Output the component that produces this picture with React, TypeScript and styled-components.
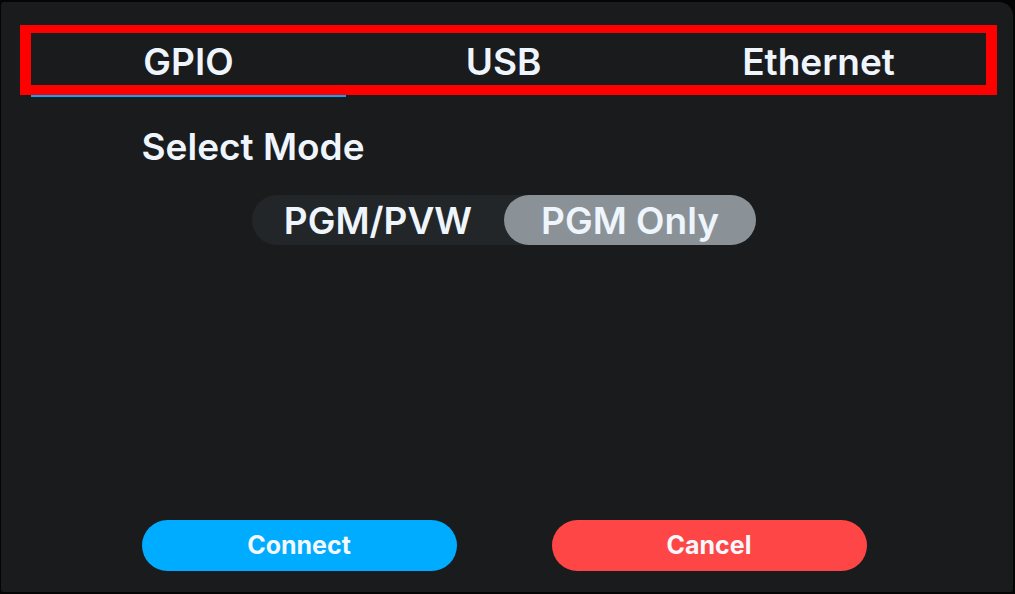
import React, { useState } from "react";
import styled, { createGlobalStyle } from "styled-components";

const GlobalStyle = createGlobalStyle`
  html, body {
    margin: 0;
    padding: 0;
    background: #050505;
  }
  body {
    font-family: Inter, "Noto Sans", "Liberation Sans", sans-serif;
    -webkit-font-smoothing: antialiased;
  }
`;

const Page = styled.div`
  width: 1015px;
  height: 594px;
  padding: 2px 2px 2px 1px;
  box-sizing: border-box;
`;

const Panel = styled.div`
  position: relative;
  height: 100%;
  background: #1a1b1d;
  border-radius: 3px 14px 3px 3px;
  padding: 30px 36px 21px 30px;
  box-sizing: border-box;
  display: flex;
  flex-direction: column;
`;

const TabBar = styled.div`
  display: grid;
  grid-template-columns: repeat(3, 1fr);
  width: 945px;
`;

const Tab = styled.button<{ $active?: boolean }>`
  height: 65px;
  background: none;
  border: none;
  border-bottom: 3px solid ${(p) => (p.$active ? "#0aa6f5" : "transparent")};
  color: #eef5fc;
  font-family: inherit;
  font-size: 37px;
  font-weight: 600;
  padding: 0 0 4px;
  cursor: pointer;
`;

const Body = styled.div`
  width: 725px;
  margin: 0 auto;
  flex: 1;
  display: flex;
  flex-direction: column;
`;

const Label = styled.div`
  margin-top: 28px;
  color: #eef5fc;
  font-size: 37px;
  font-weight: 600;
  line-height: 44px;
`;

const Segmented = styled.div`
  align-self: center;
  margin-top: 26px;
  display: grid;
  grid-template-columns: 252px 252px;
  height: 50px;
  border-radius: 25px;
  background: #232628;
`;

const Segment = styled.button<{ $selected?: boolean }>`
  border: none;
  border-radius: 25px;
  background: ${(p) => (p.$selected ? "#8b9297" : "transparent")};
  color: #eef5fc;
  font-family: inherit;
  font-size: 37px;
  font-weight: 600;
  padding: 0;
  cursor: pointer;
`;

const Actions = styled.div`
  margin-top: auto;
  display: flex;
  justify-content: space-between;
`;

const ActionButton = styled.button<{ $tone: "primary" | "danger" }>`
  width: 315px;
  height: 51px;
  border: none;
  border-radius: 26px;
  background: ${(p) => (p.$tone === "primary" ? "#00acff" : "#ff4646")};
  color: #f4f8fc;
  font-family: inherit;
  font-size: 25px;
  font-weight: 700;
  padding: 0 0 2px;
  cursor: pointer;
`;

const Highlight = styled.div`
  position: absolute;
  left: 19px;
  top: 23px;
  width: 977px;
  height: 70px;
  box-sizing: border-box;
  border-style: solid;
  border-color: #ff0000;
  border-width: 8px 11px 10px 11px;
  pointer-events: none;
`;

export default function App() {
  const [tab, setTab] = useState("GPIO");
  const [mode, setMode] = useState("PGM Only");
  return (
    <>
      <GlobalStyle />
      <Page>
        <Panel>
          <TabBar>
            {["GPIO", "USB", "Ethernet"].map((t) => (
              <Tab key={t} $active={tab === t} onClick={() => setTab(t)}>
                {t}
              </Tab>
            ))}
          </TabBar>
          <Body>
            <Label>Select Mode</Label>
            <Segmented>
              {["PGM/PVW", "PGM Only"].map((m) => (
                <Segment key={m} $selected={mode === m} onClick={() => setMode(m)}>
                  {m}
                </Segment>
              ))}
            </Segmented>
            <Actions>
              <ActionButton $tone="primary">Connect</ActionButton>
              <ActionButton $tone="danger">Cancel</ActionButton>
            </Actions>
          </Body>
          <Highlight />
        </Panel>
      </Page>
    </>
  );
}
